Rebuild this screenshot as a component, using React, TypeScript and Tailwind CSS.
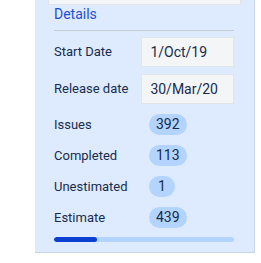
const stats = [
  { label: 'Issues', value: '392' },
  { label: 'Completed', value: '113' },
  { label: 'Unestimated', value: '1' },
  { label: 'Estimate', value: '439' },
];

export default function App() {
  return (
    <div className="w-[261px] h-[263px] bg-white overflow-hidden font-['Roboto',sans-serif] text-[13px] text-[#172b4d]">
      <div className="ml-[35px] w-[220px] h-[253px] bg-[#deebff] border-r border-b border-[#c9d4e4]">
        <div className="mx-[13px] h-[5px] bg-[#f4f5f7] border border-t-0 border-[#e1e4e9]" />
        <div className="px-[19px] pr-[20px]">
          <div className="pt-[1px] pb-[8px] border-b border-[#c8ccd3] text-[#1f4fd6] text-[14px] leading-[16px]">Details</div>
          <div className="mt-[6px] flex items-center">
            <span className="w-[89px]">Start Date</span>
            <div className="w-[94px] h-[30px] bg-[#f4f5f7] border border-[#e1e4e9] flex items-center px-[8px] text-[14px]">1/Oct/19</div>
          </div>
          <div className="mt-[7px] flex items-center">
            <span className="w-[89px]">Release date</span>
            <div className="w-[94px] h-[30px] bg-[#f4f5f7] border border-[#e1e4e9] flex items-center px-[8px] text-[14px]">30/Mar/20</div>
          </div>
          <div className="mt-[10px] flex flex-col gap-[10px]">
            {stats.map((s) => (
              <div key={s.label} className="flex items-center h-[21px]">
                <span className="w-[95px]">{s.label}</span>
                <span className="h-[21px] min-w-[26px] justify-center rounded-full bg-[#b3d4ff] px-[7px] flex items-center text-[14px]">{s.value}</span>
              </div>
            ))}
          </div>
          <div className="mt-[9px] h-[5px] rounded-full bg-[#b3d4ff] overflow-hidden">
            <div className="h-full w-[43px] rounded-full bg-[#0b3fd1]" />
          </div>
        </div>
      </div>
    </div>
  );
}
